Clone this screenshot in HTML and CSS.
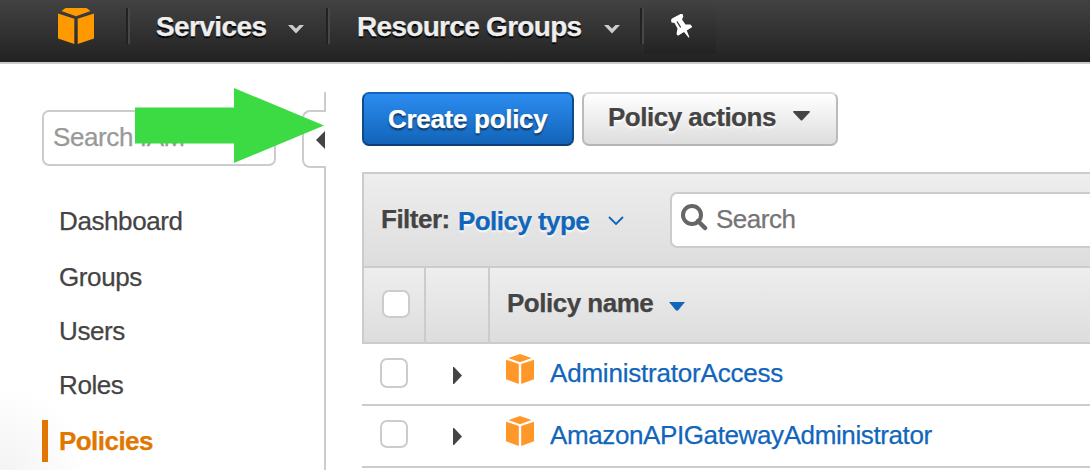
FILE: index.html
```html
<!DOCTYPE html>
<html lang="en">
<head>
<meta charset="utf-8">
<title>IAM Policies</title>
<link rel="stylesheet" href="styles.css">
</head>
<body>
<svg class="defs" width="0" height="0">
  <symbol id="cube" viewBox="0 0 28 30" preserveAspectRatio="none"><path d="M2.5 4 14 0 25.5 4 14 8.2ZM0 5.7 12.8 10V30L0 25.2ZM28 5.7 15.2 10V30L28 25.2Z"/></symbol>
</svg>
<header class="topbar">
  <div class="home"><svg class="logo" viewBox="0 0 36 36"><path d="M7.500 0H28.500L32.500 3 18 8.300 3.500 3ZM0 5.500 16.300 10.700V36L0 30.500ZM36 5.500 19.700 10.700V36L36 30.500Z"/></svg></div>
  <div class="menu services"><span class="menu-text">Services</span><svg class="chev" viewBox="0 0 16 10"><path d="M0 1H4.500L8 4.500 11.500 1H16L8 9.500Z"/></svg></div>
  <div class="menu resources"><span class="menu-text">Resource Groups</span><svg class="chev" viewBox="0 0 16 10"><path d="M0 1H4.500L8 4.500 11.500 1H16L8 9.500Z"/></svg></div>
  <div class="pin"><svg class="pin-icon" viewBox="0 0 22 24"><path fill="#fff" d="M0 6 1 4.500 9.500 0H11.500L12.300 2.500 11 5.500 14.500 10.500 19.500 10.500 21.300 13 15.800 16.500 18.500 23.500H17.500L13 18 7 21.700 5.500 20 6.500 14.500 3.500 9 0.500 8.500Z"/><path d="M6 7.500 9.700 13.500" stroke="#333" stroke-width="1.300" fill="none"/></svg></div>
</header>
<div class="page">
  <aside class="sidebar">
    <div class="side-body">
      <div class="side-search"><span>Search IAM</span></div>
      <nav class="nav">
        <a class="item dashboard">Dashboard</a>
        <a class="item groups">Groups</a>
        <a class="item users">Users</a>
        <a class="item roles">Roles</a>
        <a class="item active">Policies</a>
      </nav>
    </div>
    <div class="rail">
      <div class="rail-top"></div>
      <div class="toggle"><svg width="9" height="18" viewBox="0 0 9 18"><path d="M9 0V18L0 9Z" fill="#444"/></svg></div>
      <div class="rail-bottom"></div>
    </div>
  </aside>
  <main class="main">
    <div class="actions">
      <div class="btn primary"><span>Create policy</span></div>
      <div class="btn secondary"><span>Policy actions</span><svg class="btn-caret" width="17" height="10" viewBox="0 0 17 10"><path d="M0 1Q0 0 1 0H16Q17 0 17 1L9.500 9Q8.500 10 7.500 9Z" fill="#444"/></svg></div>
    </div>
    <section class="table">
      <div class="filter">
        <span class="filter-label">Filter:</span>
        <span class="filter-type">Policy type</span>
        <svg class="filter-chev" width="16" height="10" viewBox="0 0 16 10"><path d="M1 1 8 8 15 1" fill="none" stroke="#1166bb" stroke-width="1.900"/></svg>
        <div class="search"><svg width="27" height="27" viewBox="0 0 27 27" fill="none" stroke="#666"><circle cx="11" cy="11" r="9" stroke-width="4"/><path d="M17 17 24 24" stroke-width="4.500" stroke-linecap="round"/></svg><span>Search</span></div>
      </div>
      <div class="thead">
        <div class="th check-col"><i class="box"></i></div>
        <div class="th expand-col"></div>
        <div class="th name-col"><span>Policy name</span><svg class="sort" width="16" height="9" viewBox="0 0 16 9"><path d="M0 0H16L9 8.500H7Z" fill="#1166bb"/></svg></div>
      </div>
      <div class="row">
        <i class="box tall"></i>
        <svg class="expand" width="9" height="17" viewBox="0 0 9 17"><path d="M0 0H1L9 8.500 1 17H0Z"/></svg>
        <svg class="cube"><use href="#cube"/></svg>
        <a class="link first">AdministratorAccess</a>
      </div>
      <div class="row">
        <i class="box"></i>
        <svg class="expand raised" width="9" height="17" viewBox="0 0 9 17"><path d="M0 0H1L9 8.500 1 17H0Z"/></svg>
        <svg class="cube"><use href="#cube"/></svg>
        <a class="link second">AmazonAPIGatewayAdministrator</a>
      </div>
    </section>
  </main>
</div>
<svg class="callout" width="190" height="76" viewBox="0 0 190 76"><path d="M0 19.500H99V0L189 37.500 99 75V55.500H0Z" fill="#3ddb43"/></svg>
</body>
</html>
```
FILE: styles.css
```css
* { box-sizing: border-box; }
body {
  margin: 0;
  height: 470px;
  overflow: hidden;
  background: radial-gradient(circle at 0 470px, #f3f3f3 0, #fff 85px);
  color: #444;
  font: 26px/30px "Liberation Sans", Arial, sans-serif;
  -webkit-text-stroke: 0.25px;
  white-space: nowrap;
}
svg { display: block; flex: none; }
.defs { position: absolute; }

.topbar {
  display: flex;
  height: 64px;
  padding-top: 8px;
  border-bottom: 2px solid #cbc9cb;
  background: linear-gradient(#424242, #222);
}
.home, .menu {
  display: flex;
  height: 36px;
  border-right: 2px solid #474747;
  box-shadow: inset -2px 0 #222;
}
.home { width: 130px; padding-left: 58px; }
.logo { width: 36px; height: 36px; fill: #f90; }
.menu {
  padding-left: 26px;
  color: #eee;
  font-size: 28px;
  font-weight: bold;
  line-height: 37px;
  text-shadow: 0 2px 1px #000;
}
.services { width: 200px; }
.resources { width: 314px; padding-left: 27px; }
.menu-text { flex: none; }
.services .menu-text { width: 132px; letter-spacing: -0.6px; }
.resources .menu-text { width: 247px; letter-spacing: -0.7px; }
.chev { width: 16px; height: 10px; margin-top: 16px; fill: #ccc; }
.pin {
  width: 72px;
  height: 54px;
  margin-top: -8px;
  padding: 14px 0 0 27px;
  background: linear-gradient(rgba(0, 0, 0, 0), rgba(0, 0, 0, 0.1));
}
.pin-icon { width: 22px; height: 24px; }

.page { display: flex; height: 406px; }
.sidebar { display: flex; width: 326px; flex: none; }
.side-body { width: 302px; padding: 46px 26px 0 42px; }
.side-search {
  height: 56px;
  padding: 10px 0 0 9px;
  border: 2px solid #ccc;
  border-radius: 7px;
  background: #fff;
  color: #999;
  letter-spacing: -0.4px;
}
.nav { display: flex; flex-direction: column; padding-top: 34px; }
.item { height: 42px; padding-left: 17px; line-height: 42px; letter-spacing: -0.4px; }
.groups { margin-top: 14px; }
.users, .roles { margin-top: 12px; }
.active {
  margin-top: 14px;
  padding-left: 11px;
  border-left: 6px solid #e17700;
  color: #e17700;
  font-weight: bold;
  letter-spacing: -0.55px;
}
.rail { display: flex; flex-direction: column; width: 24px; padding-top: 28px; }
.rail-top { height: 19px; border-right: 2px solid #ccc; }
.toggle {
  height: 58px;
  margin: -1px 0;
  padding: 19px 0 0 12px;
  border: 2px solid #ccc;
  border-right: 0;
  border-radius: 8px 0 0 8px;
}
.rail-bottom { flex: 1; border-right: 2px solid #ccc; }

.main { width: 728px; margin-left: 36px; padding-top: 28px; }
.actions { display: flex; gap: 8px; margin-bottom: 26px; font-weight: bold; }
.btn { display: flex; height: 54px; border: 2px solid; border-radius: 7px; }
.primary {
  width: 212px;
  padding: 10px 0 0 24px;
  border-color: #1166bb #0e4b8a #0d3f74;
  background: linear-gradient(#2c8cf0, #1264b8);
  color: #fff;
  letter-spacing: -0.3px;
  text-shadow: 0 2px 2px rgba(0, 0, 0, 0.6);
}
.secondary {
  width: 256px;
  padding: 8px 0 0 24px;
  border-color: #ddd #bbb #b5b5b5;
  background: linear-gradient(#fff, #ddd);
  letter-spacing: -0.5px;
  text-shadow: 0 2px 2px #fff;
}
.secondary span { width: 185px; }
.btn-caret { margin-top: 9px; }

.filter {
  display: flex;
  height: 94px;
  padding-left: 17px;
  border: solid #ccc;
  border-width: 2px 0 0 2px;
  background: linear-gradient(#eee, #ddd);
  font-weight: bold;
}
.filter-label { width: 77px; padding-top: 30px; letter-spacing: -0.5px; }
.filter-type {
  width: 150px;
  padding-top: 32px;
  color: #1166bb;
  letter-spacing: -0.55px;
  text-shadow: 0 2px 2px #fff;
}
.filter-chev { margin: 42px 46px 0 0; }
.search {
  display: flex;
  flex: 1;
  gap: 8px;
  height: 56px;
  margin-top: 18px;
  padding: 10px 0 0 9px;
  border: 2px solid #ccc;
  border-right: 0;
  border-radius: 7px 0 0 7px;
  background: #fff;
  color: #757575;
  font-weight: normal;
  letter-spacing: -0.5px;
}
.thead {
  display: flex;
  height: 78px;
  border: solid #ccc;
  border-width: 2px 0 2px 2px;
  background: linear-gradient(#eee, #ddd);
  font-weight: bold;
}
.check-col { width: 62px; padding: 22px 0 0 18px; border-right: 2px solid #ccc; }
.expand-col { width: 64px; border-right: 2px solid #ccc; }
.name-col { display: flex; padding: 20px 0 0 17px; letter-spacing: -0.5px; }
.name-col span { width: 162px; }
.sort { margin-top: 14px; }
.box {
  display: block;
  flex: none;
  width: 28px;
  height: 28px;
  border: 2px solid #ccc;
  border-radius: 7px;
  background: #fff;
}
.row {
  display: flex;
  height: 62px;
  padding: 14px 0 0 18px;
  border-bottom: 2px solid #ccc;
}
.tall { height: 30px; }
.expand { margin: 9px 44px 0 45px; fill: #444; }
.raised { margin-top: 8px; }
.cube { width: 28px; height: 30px; margin: -4px 16px 0 0; fill: #ff9729; }
.link { color: #1166bb; }
.first { letter-spacing: -0.2px; }
.second { letter-spacing: -0.39px; }

.callout { position: absolute; left: 135px; top: 88px; }
```
